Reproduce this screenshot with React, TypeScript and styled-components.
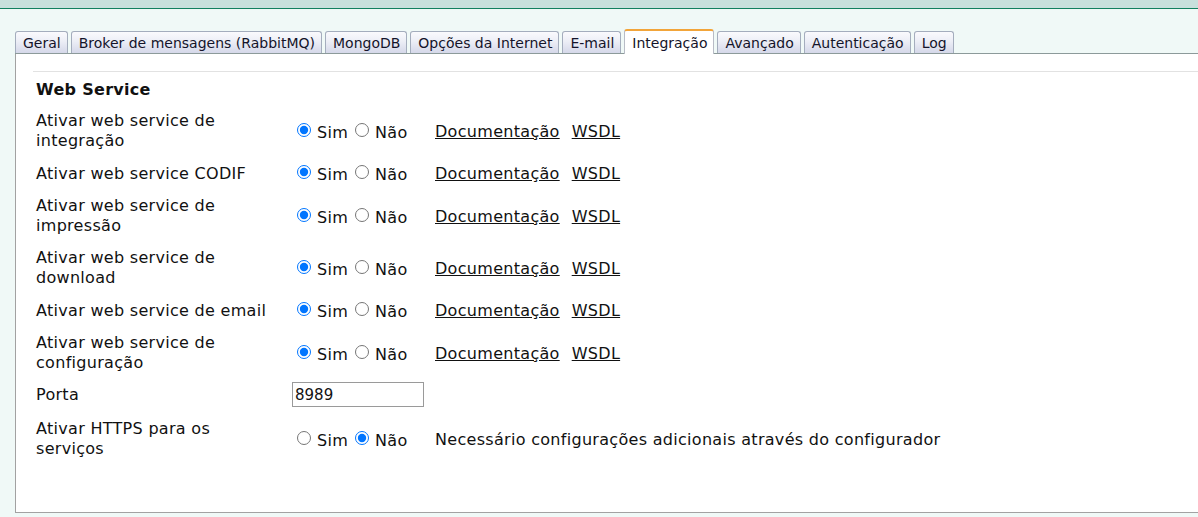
import React from 'react'
import styled, { createGlobalStyle, css } from 'styled-components'

const GlobalStyle = createGlobalStyle`
  html, body {
    margin: 0;
    padding: 0;
    background: #f0f9f7;
    overflow: hidden;
  }
  body {
    font-family: Verdana, "DejaVu Sans", sans-serif;
    color: #111;
  }
`

const TopBand = styled.div`
  height: 8px;
  background: #c8e0dc;
  border-bottom: 1px solid #12805f;
`

const Content = styled.div`
  padding: 20px 0 0 15px;
`

const TabStrip = styled.div`
  display: flex;
  align-items: flex-end;
  gap: 3px;
  height: 24px;
  width: 1300px;
  border-bottom: 1px solid #8c9a9a;
`

const Tab = styled.div<{ $active?: boolean }>`
  box-sizing: border-box;
  height: 22px;
  padding: 0 6px 0 7px;
  display: flex;
  align-items: center;
  font-size: 14px;
  color: #14142a;
  border: 1px solid #a4adbd;
  border-bottom: none;
  border-radius: 3px 3px 0 0;
  background: linear-gradient(to bottom, #fafafd 0%, #eceef6 45%, #d5d8e9 100%);
  white-space: nowrap;
  cursor: default;

  ${p =>
    p.$active &&
    css`
      height: 25px;
      margin-bottom: -1px;
      padding-top: 1px;
      background: #fff;
      border-color: #b8bcc6;
      border-top: 2px solid #f2a53a;
    `}
`

const Panel = styled.div`
  width: 1300px;
  background: #fff;
  border: 1px solid #a2a2a2;
  border-top: none;
  padding: 17px 0 47px 17px;
`

const Rule = styled.div`
  height: 1px;
  background: #e2e2e2;
`

const Heading = styled.h3`
  margin: 8px 0 5px 3px;
  font-size: 16px;
  line-height: 20px;
  font-weight: bold;
  letter-spacing: 0.3px;
`

const Rows = styled.div`
  padding-left: 3px;
`

const Row = styled.div<{ $compact?: boolean }>`
  display: grid;
  grid-template-columns: 256px 143px auto;
  align-items: center;
  padding: ${p => (p.$compact ? '3px 0 6px' : '6px 0')};
`

const Label = styled.div`
  font-size: 16px;
  line-height: 20px;
  letter-spacing: 0.3px;
  padding-right: 14px;
`

const Options = styled.div`
  display: flex;
  align-items: center;
  font-size: 16px;
  letter-spacing: 0.3px;
`

const Option = styled.label`
  display: inline-flex;
  align-items: center;
  gap: 6px;
  margin-right: 2px;

  input {
    width: 14px;
    height: 14px;
    margin: 0 0 3px 5px;
    accent-color: #0075ff;
  }

  span {
    padding-top: 2px;
  }
`

const Links = styled.div`
  display: flex;
  font-size: 16px;
  letter-spacing: 0.3px;
`

const DocLink = styled.a`
  color: #111;
  text-decoration: underline;
  margin-right: 12px;
`

const Note = styled.div`
  font-size: 16px;
  letter-spacing: 0.3px;
`

const PortInput = styled.input`
  box-sizing: border-box;
  width: 132px;
  height: 25px;
  border: 1px solid #9a9a9a;
  border-radius: 0;
  padding: 0 2px;
  font-family: Verdana, "DejaVu Sans", sans-serif;
  font-size: 15px;
  color: #111;
  outline: none;
  caret-color: #000;
`

const tabs = [
  'Geral',
  'Broker de mensagens (RabbitMQ)',
  'MongoDB',
  'Opções da Internet',
  'E-mail',
  'Integração',
  'Avançado',
  'Autenticação',
  'Log',
]

const services = [
  { id: 'integracao', label: 'Ativar web service de integração' },
  { id: 'codif', label: 'Ativar web service CODIF' },
  { id: 'impressao', label: 'Ativar web service de impressão' },
  { id: 'download', label: 'Ativar web service de download' },
  { id: 'email', label: 'Ativar web service de email' },
  { id: 'configuracao', label: 'Ativar web service de configuração' },
]

const YesNo = ({ name, yes }: { name: string; yes: boolean }) => (
  <Options>
    <Option>
      <input type="radio" name={name} defaultChecked={yes} />
      <span>Sim</span>
    </Option>
    <Option>
      <input type="radio" name={name} defaultChecked={!yes} />
      <span>Não</span>
    </Option>
  </Options>
)

export default function App() {
  return (
    <>
      <GlobalStyle />
      <TopBand />
      <Content>
        <TabStrip>
          {tabs.map(t => (
            <Tab key={t} $active={t === 'Integração'}>
              {t}
            </Tab>
          ))}
        </TabStrip>
        <Panel>
          <Rule />
          <Heading>Web Service</Heading>
          <Rows>
            {services.map(s => (
              <Row key={s.id}>
                <Label>{s.label}</Label>
                <YesNo name={s.id} yes />
                <Links>
                  <DocLink href="#">Documentação</DocLink>
                  <DocLink href="#">WSDL</DocLink>
                </Links>
              </Row>
            ))}
            <Row $compact>
              <Label>Porta</Label>
              <PortInput defaultValue="8989" autoFocus />
            </Row>
            <Row>
              <Label>Ativar HTTPS para os serviços</Label>
              <YesNo name="https" yes={false} />
              <Note>Necessário configurações adicionais através do configurador</Note>
            </Row>
          </Rows>
        </Panel>
      </Content>
    </>
  )
}
